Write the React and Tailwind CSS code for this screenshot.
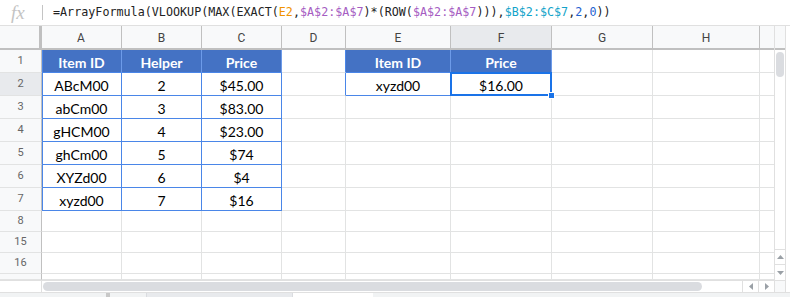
import React from 'react';

const colWidths = ['A', 'B', 'C', 'D', 'E', 'F', 'G', 'H'];

// table contents, by row number
const rows = [
  { n: '1', h: 'h-[23px]', cells: ['Item ID', 'Helper', 'Price', '', 'Item ID', 'Price', '', ''] },
  { n: '2', h: 'h-[23px]', cells: ['ABcM00', '2', '$45.00', '', 'xyzd00', '$16.00', '', ''] },
  { n: '3', h: 'h-[23px]', cells: ['abCm00', '3', '$83.00', '', '', '', '', ''] },
  { n: '4', h: 'h-[23px]', cells: ['gHCM00', '4', '$23.00', '', '', '', '', ''] },
  { n: '5', h: 'h-[23px]', cells: ['ghCm00', '5', '$74', '', '', '', '', ''] },
  { n: '6', h: 'h-[23px]', cells: ['XYZd00', '6', '$4', '', '', '', '', ''] },
  { n: '7', h: 'h-[23px]', cells: ['xyzd00', '7', '$16', '', '', '', '', ''] },
  { n: '8', h: 'h-[21px]', cells: ['', '', '', '', '', '', '', ''] },
  { n: '15', h: 'h-[21px]', cells: ['', '', '', '', '', '', '', ''] },
  { n: '16', h: 'h-[21px]', cells: ['', '', '', '', '', '', '', ''] },
  { n: '', h: 'h-[6px]', cells: ['', '', '', '', '', '', '', ''] },
];

const widthClass = {
  A: 'w-[80px]',
  B: 'w-[80px]',
  C: 'w-[80px]',
  D: 'w-[64px]',
  E: 'w-[105px]',
  F: 'w-[101px]',
  G: 'w-[101px]',
  H: 'w-[107px]',
};

const BLUE = 'border-[#4a86e8]';

const Cell = ({ col, r, text }) => {
  const ci = colWidths.indexOf(col);
  const inLeftTable = ci <= 2 && r >= 1 && r <= 7;
  const inRightTable = (col === 'E' || col === 'F') && r >= 1 && r <= 2;
  const isHeader = r === 1 && (inLeftTable || inRightTable);

  // border colours: blue round the two tables, grey gridlines elsewhere
  const rightBlue = (inLeftTable && col === 'C') || (col === 'D' && r >= 1 && r <= 2) || inRightTable;
  const bottomBlue = (inLeftTable && (r === 7 || r === 1)) || (inRightTable);
  const innerBlue = inLeftTable || inRightTable;

  let cls = `${widthClass[col]} shrink-0 border-r border-b flex items-center justify-center relative `;
  cls += rightBlue || innerBlue ? (isHeader ? 'border-r-[#6d9be9] ' : 'border-r-[#4a86e8] ') : 'border-r-[#e2e3e3] ';
  cls += bottomBlue || innerBlue ? 'border-b-[#4a86e8] ' : 'border-b-[#e2e3e3] ';
  if (col === 'A' && inLeftTable) cls += 'shadow-[inset_1px_0_0_#4a86e8] ';
  if (col === 'C' && inLeftTable) cls += 'border-r-[#4a86e8] ';
  if (isHeader) cls += 'bg-[#4472c4] text-white font-bold ';
  else cls += 'bg-white text-black ';

  const selected = col === 'F' && r === 2;

  return (
    <div className={cls}>
      <span className="pt-[2px]">{text}</span>
      {selected && (
        <>
          <div className="absolute -left-px -top-px w-[102px] h-[24px] border-2 border-[#1a73e8]" />
          <div className="absolute -right-[4px] -bottom-[4px] w-[7px] h-[7px] bg-[#1a73e8] border border-white z-10" />
        </>
      )}
    </div>
  );
};

const Formula = () => (
  <div className="whitespace-nowrap text-[11.7px] text-[#222] tracking-[0.02px]" style={{ fontFamily: "'DejaVu Sans Mono', 'Liberation Mono', monospace" }}>
    =ArrayFormula(VLOOKUP(MAX(EXACT(
    <span className="text-[#f09300]">E2</span>,
    <span className="text-[#a55cc2]">$A$2:$A$7</span>)*(ROW(
    <span className="text-[#a55cc2]">$A$2:$A$7</span>))),
    <span className="text-[#12a3c9]">$B$2:$C$7</span>,
    <span className="text-[#1e62d0]">2</span>,
    <span className="text-[#1e62d0]">0</span>))
  </div>
);

const App = () => {
  return (
    <div className="w-[790px] h-[297px] overflow-hidden bg-white flex flex-col" style={{ fontFamily: "Lato, 'Open Sans', sans-serif" }}>
      {/* Formula bar */}
      <div className="h-[26px] shrink-0 flex items-center border-b border-[#e0e0e0]">
        <div className="w-[42px] pl-[11px] text-[19px] italic text-[#c4c4c4] leading-none" style={{ fontFamily: "'Liberation Serif', serif" }}>
          fx
        </div>
        <div className="w-px h-[15px] bg-[#c4c4c4] mr-[10px]" />
        <Formula />
      </div>

      <div className="flex flex-1 min-h-0">
        {/* Grid */}
        <div className="w-[774px] shrink-0 flex flex-col">
          {/* Column headers */}
          <div className="flex h-[24px] shrink-0 bg-[#f8f9fa] text-[12px] text-[#444]" style={{ fontFamily: "Roboto, Arial, sans-serif" }}>
            <div className="w-[42px] shrink-0 border-r-[3px] border-b-[2px] border-[#c0c0c0]" />
            {colWidths.map((c) => (
              <div
                key={c}
                className={`${widthClass[c]} shrink-0 border-r border-b-2 border-r-[#c0c0c0] border-b-[#c0c0c0] flex items-center justify-center pt-[1px] ${c === 'F' ? 'bg-[#e8eaed]' : ''} ${c === 'A' ? '-ml-[1px] w-[81px]' : ''}`}
              >
                {c}
              </div>
            ))}
            <div className="w-[14px] shrink-0 border-b-2 border-[#c0c0c0]" />
          </div>

          {/* Rows */}
          {rows.map((row, i) => {
            const r = i + 1;
            return (
              <div key={i} className={`flex ${row.h} shrink-0 text-[14px]`}>
                <div
                  className={`w-[42px] shrink-0 border-r border-b border-r-[#c0c0c0] border-b-[#e2e3e3] flex items-center justify-center text-[11px] text-[#666] pt-[1px] ${row.n === '2' ? 'bg-[#e8eaed]' : 'bg-[#f8f9fa]'}`}
                  style={{ fontFamily: "Roboto, Arial, sans-serif" }}
                >
                  {row.n}
                </div>
                {colWidths.map((c, ci) => (
                  <Cell key={c} col={c} r={row.n === '' ? 99 : Number(row.n) <= 7 ? r : 99} text={row.cells[ci]} />
                ))}
                <div className="w-[14px] shrink-0 border-b border-[#e2e3e3]" />
              </div>
            );
          })}

          {/* Horizontal scrollbar */}
          <div className="h-[12px] shrink-0 flex border-t border-[#e0e0e0] mt-auto">
            <div className="w-[42px] shrink-0 border-r border-[#e0e0e0]" />
            <div className="flex-1 flex items-center px-[1px]">
              <div className="w-[659px] h-[9px] rounded-full bg-[#dadce0]" />
            </div>
            <div className="w-[16px] shrink-0 border-l border-[#e0e0e0] flex items-center justify-center">
              <svg width="4" height="7" viewBox="0 0 4 7"><path d="M4 0 L0 3.5 L4 7 Z" fill="#9aa0a6" /></svg>
            </div>
            <div className="w-[16px] shrink-0 border-l border-[#e0e0e0] flex items-center justify-center">
              <svg width="4" height="7" viewBox="0 0 4 7"><path d="M0 0 L4 3.5 L0 7 Z" fill="#9aa0a6" /></svg>
            </div>
          </div>
        </div>

        {/* Vertical scrollbar */}
        <div className="w-[12px] shrink-0 border-l border-r border-[#e0e0e0] flex flex-col">
          <div className="h-[24px] shrink-0 bg-[#f8f9fa] border-b-2 border-[#c0c0c0]" />
          <div className="flex-1 flex flex-col items-center pt-[2px]">
            <div className="w-[8px] h-[25px] rounded-full bg-[#dadce0]" />
          </div>
          <div className="h-[15px] shrink-0 border-t border-[#e0e0e0] flex items-center justify-center">
            <svg width="7" height="4" viewBox="0 0 7 4"><path d="M0 4 L3.5 0 L7 4 Z" fill="#9aa0a6" /></svg>
          </div>
          <div className="h-[16px] shrink-0 border-t border-[#e0e0e0] flex items-center justify-center">
            <svg width="7" height="4" viewBox="0 0 7 4"><path d="M0 0 L3.5 4 L7 0 Z" fill="#9aa0a6" /></svg>
          </div>
          <div className="h-[12px] shrink-0 border-t border-[#e0e0e0] bg-[#f8f9fa]" />
        </div>
        <div className="flex-1" />
      </div>

      {/* Sheet tab strip */}
      <div className="h-[5px] shrink-0 flex bg-[#f1f3f4] border-t border-[#e0e0e0]">
        <div className="w-[106px] shrink-0" />
        <div className="w-[4px] shrink-0 bg-[#c8c8c8]" />
        <div className="w-[37px] shrink-0 border-r border-[#dadce0]" />
        <div className="w-[146px] shrink-0 bg-[#e8eaed] border-r border-[#dadce0]" />
        <div className="w-[80px] shrink-0 bg-white" />
        <div className="flex-1" />
      </div>
    </div>
  );
};

export default App;
